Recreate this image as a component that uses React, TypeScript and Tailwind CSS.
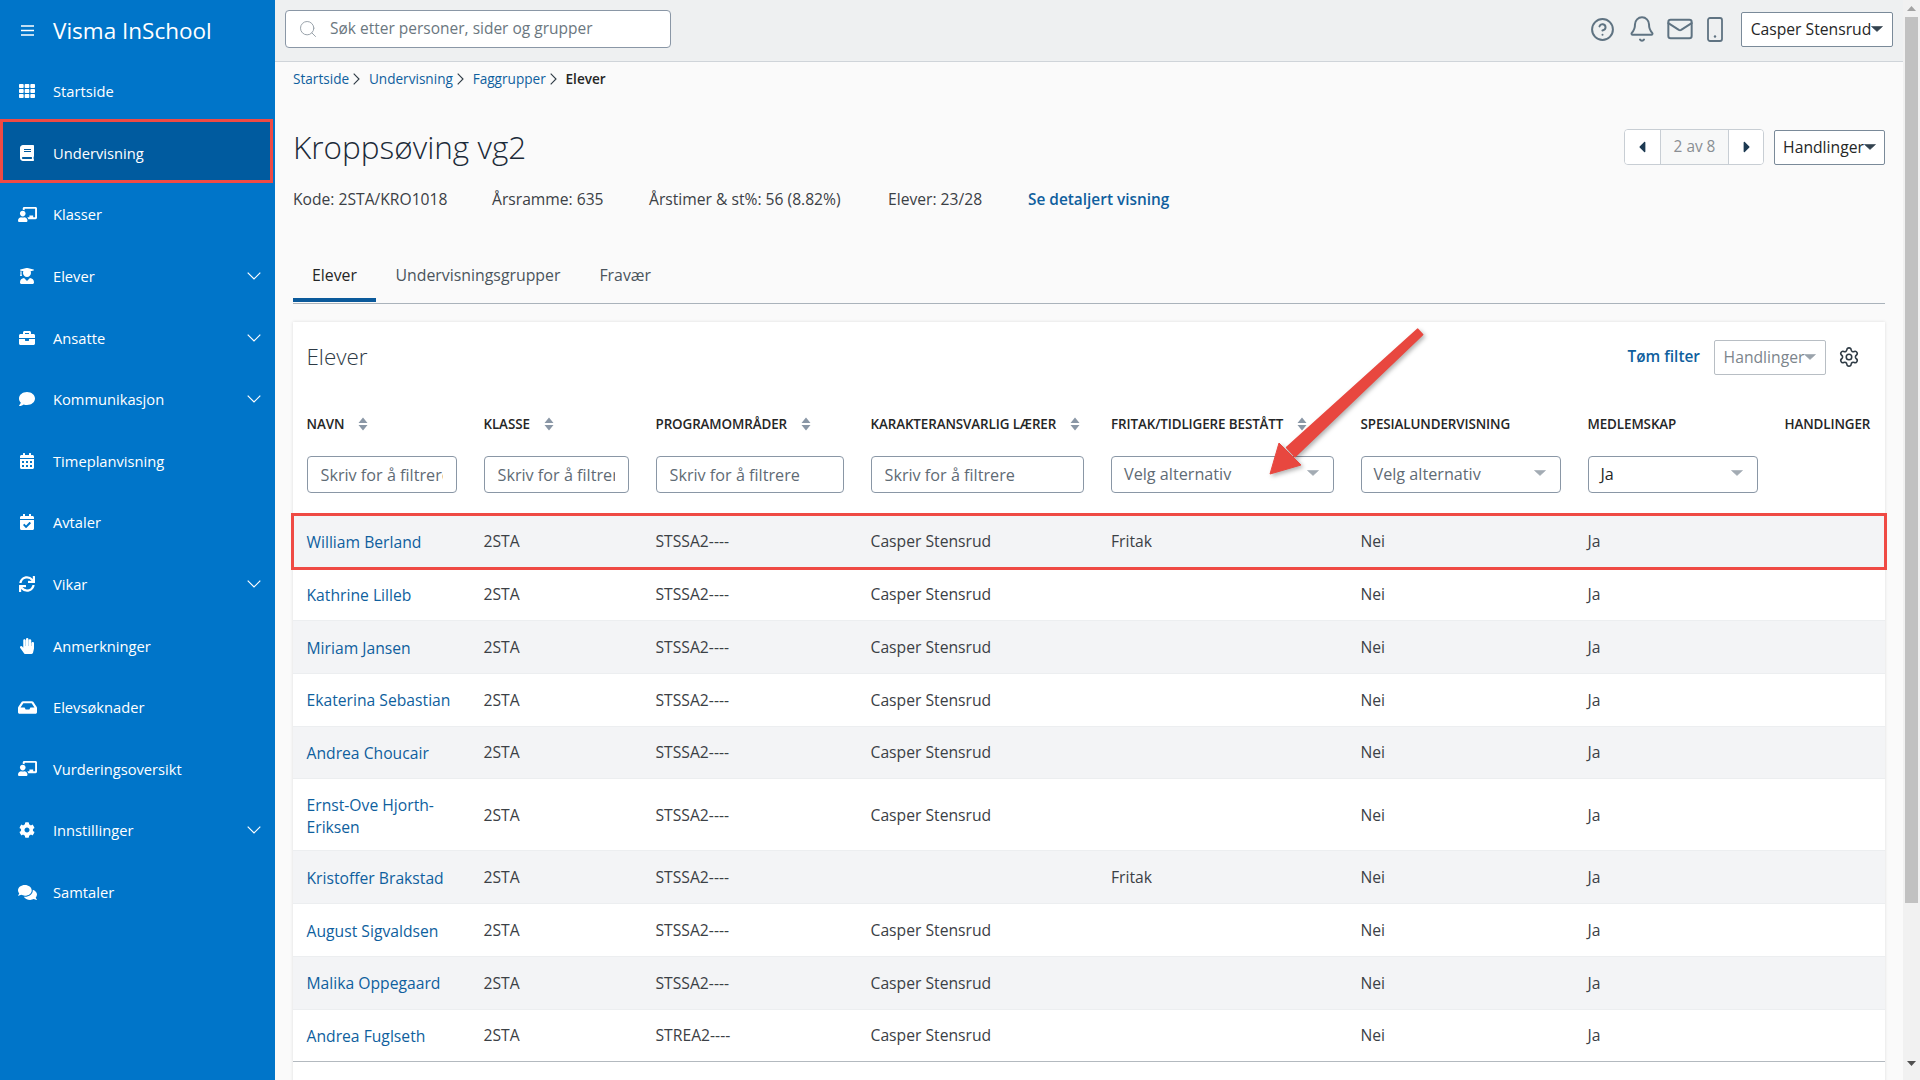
import React from "react";
import { FaTh, FaBook, FaChalkboardTeacher, FaUserGraduate, FaBriefcase, FaComment, FaCalendarAlt, FaCalendarCheck, FaSync, FaHandPaper, FaInbox, FaCog, FaComments, FaCaretLeft, FaCaretRight } from "react-icons/fa";
import { Search, CircleHelp, Bell, Mail, Settings } from "lucide-react";

const nav = [
  { label: "Startside", icon: FaTh },
  { label: "Undervisning", icon: FaBook, active: true },
  { label: "Klasser", icon: FaChalkboardTeacher },
  { label: "Elever", icon: FaUserGraduate, chev: true },
  { label: "Ansatte", icon: FaBriefcase, chev: true },
  { label: "Kommunikasjon", icon: FaComment, chev: true },
  { label: "Timeplanvisning", icon: FaCalendarAlt },
  { label: "Avtaler", icon: FaCalendarCheck },
  { label: "Vikar", icon: FaSync, chev: true },
  { label: "Anmerkninger", icon: FaHandPaper },
  { label: "Elevsøknader", icon: FaInbox },
  { label: "Vurderingsoversikt", icon: FaChalkboardTeacher },
  { label: "Innstillinger", icon: FaCog, chev: true },
  { label: "Samtaler", icon: FaComments },
];

const T = "Casper Stensrud";
const rows = [
  ["William Berland", "STSSA2----", T, "Fritak"],
  ["Kathrine Lilleb", "STSSA2----", T, ""],
  ["Miriam Jansen", "STSSA2----", T, ""],
  ["Ekaterina Sebastian", "STSSA2----", T, ""],
  ["Andrea Choucair", "STSSA2----", T, ""],
  ["Ernst-Ove Hjorth-Eriksen", "STSSA2----", T, ""],
  ["Kristoffer Brakstad", "STSSA2----", "", "Fritak"],
  ["August Sigvaldsen", "STSSA2----", T, ""],
  ["Malika Oppegaard", "STSSA2----", T, ""],
  ["Andrea Fuglseth", "STREA2----", T, ""],
];

function Caret({ className = "text-[#33424f]" }: { className?: string }) {
  return (
    <svg width="12" height="6" viewBox="0 0 12 6" className={className}>
      <path d="M0.5 0.5h11L6 5.5z" fill="currentColor" stroke="currentColor" strokeLinejoin="round" strokeWidth="0.6" />
    </svg>
  );
}

function Sort() {
  return (
    <svg width="10" height="14" viewBox="0 0 10 14" className="text-[#8a97a6]">
      <path d="M5 0.5L9.5 6H0.5zM0.5 8H9.5L5 13.5z" fill="currentColor" />
    </svg>
  );
}

function Head({ label, sort }: { label: string; sort?: boolean }) {
  return (
    <th className="h-[62px] px-[13.5px] pt-[2px] text-left align-middle font-semibold text-[13.4px] text-[#252626] whitespace-nowrap tracking-[-0.1px]">
      <span className="flex items-center gap-[14px]">
        {label}
        {sort && <Sort />}
      </span>
    </th>
  );
}

function TextFilter() {
  return (
    <td className="px-[13.5px] pt-[2px] align-top">
      <input
        readOnly
        placeholder="Skriv for å filtrere"
        className="w-full h-[37px] rounded-[4px] border border-[#8a97a6] bg-white px-[13px] text-[16.2px] text-[#5f6b75] placeholder:text-[#5f6b75] outline-none"
      />
    </td>
  );
}

function SelectFilter({ label, dark }: { label: string; dark?: boolean }) {
  return (
    <td className="px-[13.5px] pt-[2px] align-top">
      <div className="flex h-[37px] items-center justify-between rounded-[4px] border border-[#8a97a6] bg-white pl-[12px] pr-[14px] text-[16.2px]">
        <span className={dark ? "text-[#252626]" : "text-[#5f6b75]"}>{label}</span>
        <Caret className="text-[#a3abb3] mb-[4px]" />
      </div>
    </td>
  );
}

function Btn({ children, muted, className = "" }: { children: React.ReactNode; muted?: boolean; className?: string }) {
  return (
    <div className={`flex items-center justify-center rounded-[2px] border h-[35px] ${muted ? "border-[#b8bec4] text-[#7c858c]" : "border-[#7a8a99] text-[#252626]"} bg-white text-[15.7px] ${className}`}>
      <span className="pt-[1px]">{children}</span>
      <Caret className={muted ? "text-[#9aa3ab]" : "text-[#33424f]"} />
    </div>
  );
}

export default function App() {
  return (
    <div className="relative flex h-screen w-full overflow-hidden bg-[#fafafa] font-['Open_Sans',sans-serif] text-[15.7px] text-[#3b4045]">
      <aside className="w-[275px] shrink-0 bg-[#0075c9] text-white">
        <div className="flex h-[60.5px] items-center">
          <svg width="13" height="11" viewBox="0 0 13 11" className="ml-[21px]">
            <path d="M0 1h13M0 5.5h13M0 10h13" stroke="#fff" strokeWidth="1.4" />
          </svg>
          <span className="ml-[19px] pt-[2px] text-[22.5px] leading-none">Visma InSchool</span>
        </div>
        <nav>
          {nav.map((n) => {
            const Icon = n.icon;
            return (
              <div key={n.label} className="relative flex h-[61.6px] items-center text-[14.7px]">
                {n.active && <div className="absolute left-0 right-[2px] top-[-3.5px] bottom-[1px] border-[3px] border-[#ef4a44] bg-[#005b9f]" />}
                <span className="relative flex w-[53px] justify-center">
                  <Icon size={n.label === "Klasser" || n.label === "Vurderingsoversikt" || n.label === "Elevsøknader" || n.label === "Samtaler" ? 19 : 16} className="ml-[1px]" />
                </span>
                <span className="relative">{n.label}</span>
                {n.chev && (
                  <svg width="14" height="8" viewBox="0 0 14 8" className="absolute left-[247px]">
                    <path d="M0.7 0.7L7 7L13.3 0.7" fill="none" stroke="#fff" strokeWidth="1.2" />
                  </svg>
                )}
              </div>
            );
          })}
        </nav>
      </aside>

      <main className="flex min-w-0 flex-1 flex-col">
        <header className="flex h-[62px] shrink-0 items-center border-b border-[#cfd4d9] bg-[#eef0f1] pb-[3px] pl-[10px] pr-[10px]">
          <div className="flex h-[38px] w-[386px] items-center rounded-[4px] border border-[#8a97a6] bg-white pl-[12px]">
            <Search size={20} strokeWidth={1.2} className="text-[#9aa3ab]" />
            <span className="ml-[12px] text-[15.5px] text-[#6b7780]">Søk etter personer, sider og grupper</span>
          </div>
          <div className="ml-auto flex items-center">
            <CircleHelp size={25} strokeWidth={1.9} className="text-[#5f7382]" />
            <Bell size={28} strokeWidth={1.7} className="ml-[13.5px] text-[#5f7382]" />
            <Mail size={28} strokeWidth={1.7} className="ml-[10px] text-[#5f7382]" />
            <svg width="16" height="25" viewBox="0 0 16 25" className="ml-[13px] text-[#5f7382]">
              <rect x="1" y="1" width="14" height="23" rx="2" fill="none" stroke="currentColor" strokeWidth="1.8" />
              <circle cx="8" cy="19.5" r="1.2" fill="currentColor" />
            </svg>
            <Btn className="ml-[18px] w-[152px]">{T}</Btn>
          </div>
        </header>

        <div className="flex-1 overflow-hidden px-[18px] pt-[7px]">
          <div className="flex h-[20px] items-center text-[13.6px]">
            {["Startside", "Undervisning", "Faggrupper"].map((b) => (
              <span key={b} className="mr-[9px] flex items-center text-[#0f5f9e]">
                {b}
                <svg width="7" height="12" viewBox="0 0 7 12" className="ml-[3.8px]">
                  <path d="M0.7 0.7L6 6L0.7 11.3" fill="none" stroke="#2f3b45" strokeWidth="1.1" />
                </svg>
              </span>
            ))}
            <span className="font-semibold text-[#252626]">Elever</span>
          </div>

          <div className="mt-[38px] flex h-[40px] items-center justify-between">
            <h1 className="text-[31.5px] font-light leading-none text-[#1c2b39]">Kroppsøving vg2</h1>
            <div className="flex items-center">
              <div className="flex h-[36px] overflow-hidden rounded-[4px] border border-[#c8ced4]">
                <div className="flex w-[35px] items-center justify-center bg-white pr-[2px] text-[#1d3a52]"><FaCaretLeft size={18} /></div>
                <div className="flex w-[69px] items-center justify-center border-x border-[#c8ced4] bg-[#f7f8f8] text-[15.4px] text-[#8a8f94]">2 av 8</div>
                <div className="flex w-[34px] items-center justify-center bg-white pl-[2px] text-[#1d3a52]"><FaCaretRight size={18} /></div>
              </div>
              <Btn className="ml-[10px] w-[111px]">Handlinger</Btn>
            </div>
          </div>

          <div className="mt-[23px] flex h-[20px] items-center whitespace-nowrap text-[15.65px] text-[#3b4045]">
            <span className="w-[199px]">Kode: 2STA/KRO1018</span>
            <span className="w-[157px]">Årsramme: 635</span>
            <span className="w-[239px]">Årstimer &amp; st%: 56 (8.82%)</span>
            <span className="w-[140px]">Elever: 23/28</span>
            <span className="text-[15.4px] font-semibold text-[#0f5f9e]">Se detaljert visning</span>
          </div>

          <div className="mt-[38px] flex h-[56px] border-b border-[#aab3bb] text-[15.85px]">
            <div className="flex h-[54px] items-center border-b-[4px] border-[#0b5a9b] px-[19px] pt-[6px] text-[#252626]">Elever</div>
            <div className="flex h-[54px] items-center px-[19.5px] pt-[2px] text-[#4b555d]">Undervisningsgrupper</div>
            <div className="flex h-[54px] items-center px-[19.5px] pt-[2px] text-[#4b555d]">Fravær</div>
          </div>

          <section className="mt-[18px] bg-white pb-[40px] shadow-[0_0_3px_rgba(0,0,0,0.12)]">
            <div className="flex h-[70px] items-center justify-between pl-[13.5px] pr-[25px]">
              <h2 className="pb-[1px] text-[22.4px] font-light text-[#2d3a45]">Elever</h2>
              <div className="flex items-center">
                <span className="text-[15.4px] font-semibold text-[#0f5f9e]">Tøm filter</span>
                <Btn muted className="ml-[14px] w-[112px]">Handlinger</Btn>
                <Settings size={22} strokeWidth={1.7} className="ml-[12px] text-[#2f3b45]" />
              </div>
            </div>

            <table className="w-full table-fixed border-collapse">
              <colgroup>
                <col className="w-[177px]" />
                <col className="w-[172px]" />
                <col className="w-[215px]" />
                <col className="w-[240.5px]" />
                <col className="w-[249.5px]" />
                <col className="w-[227px]" />
                <col className="w-[197px]" />
                <col className="w-[114px]" />
              </colgroup>
              <thead>
                <tr>
                  <Head label="NAVN" sort />
                  <Head label="KLASSE" sort />
                  <Head label="PROGRAMOMRÅDER" sort />
                  <Head label="KARAKTERANSVARLIG LÆRER" sort />
                  <Head label="FRITAK/TIDLIGERE BESTÅTT" sort />
                  <Head label="SPESIALUNDERVISNING" />
                  <Head label="MEDLEMSKAP" />
                  <Head label="HANDLINGER" />
                </tr>
                <tr className="h-[61px]">
                  <TextFilter />
                  <TextFilter />
                  <TextFilter />
                  <TextFilter />
                  <SelectFilter label="Velg alternativ" />
                  <SelectFilter label="Velg alternativ" />
                  <SelectFilter label="Ja" dark />
                  <td />
                </tr>
              </thead>
              <tbody>
                {rows.map((r, i) => (
                  <tr
                    key={r[0]}
                    className={`border-b ${i === 9 ? "border-[#b3b9bf]" : "border-[#eceef0]"} ${i === 5 ? "h-[72px]" : "h-[52.75px]"} ${i % 2 === 0 ? "bg-[#f3f4f6]" : "bg-white"} ${i === 0 ? "outline-[3px] outline-solid -outline-offset-1 outline-[#ef4a44]" : ""}`}
                  >
                    <td className="px-[13.5px] pt-[1.5px] leading-[22px] text-[#0f5f9e]">{r[0]}</td>
                    <td className="px-[13.5px] pt-[1.5px]">2STA</td>
                    <td className="px-[13.5px] pt-[1.5px]">{r[1]}</td>
                    <td className="px-[13.5px] pt-[1.5px]">{r[2]}</td>
                    <td className="px-[13.5px] pt-[1.5px]">{r[3]}</td>
                    <td className="px-[13.5px] pt-[1.5px]">Nei</td>
                    <td className="px-[13.5px] pt-[1.5px]">Ja</td>
                    <td />
                  </tr>
                ))}
              </tbody>
            </table>
          </section>
        </div>
      </main>

      <div className="flex w-[17px] shrink-0 flex-col bg-[#f1f1f1]">
        <div className="flex h-[17px] items-center justify-center">
          <svg width="9" height="5" viewBox="0 0 9 5"><path d="M4.5 0L9 5H0z" fill="#a3a3a3" /></svg>
        </div>
        <div className="ml-[2px] h-[886px] w-[13px] bg-[#c1c1c1]" />
        <div className="mt-auto flex h-[20px] items-start justify-center pt-[1px]">
          <svg width="9" height="5" viewBox="0 0 9 5"><path d="M0 0H9L4.5 5z" fill="#505050" /></svg>
        </div>
      </div>

      <svg width="180" height="170" viewBox="0 0 180 170" className="absolute left-[1255px] top-[320px] drop-shadow-[2px_2px_2px_rgba(0,0,0,0.3)]">
        <path d="M167.4 14.6L40.1 136.4L31.9 127.6L162.6 9.4z" fill="#e8473f" stroke="#e8473f" strokeWidth="2" strokeLinejoin="round" />
        <path d="M15 154L24 123L46 145z" fill="#e8473f" stroke="#e8473f" strokeWidth="1" strokeLinejoin="round" />
      </svg>
    </div>
  );
}
